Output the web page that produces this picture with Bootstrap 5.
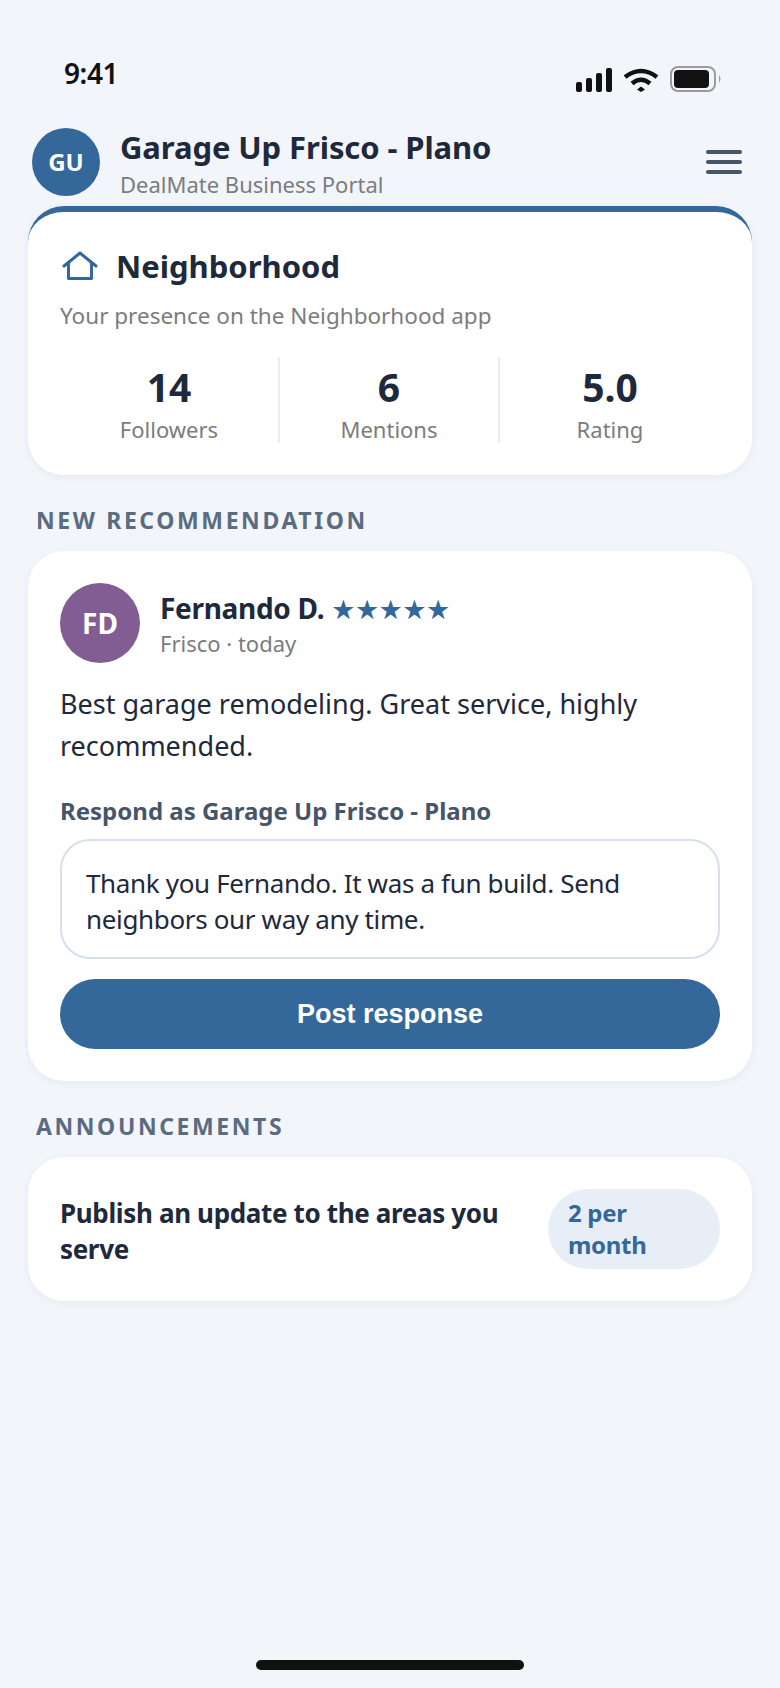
<!DOCTYPE html>
<html lang="en">
<head>
  <meta charset="UTF-8">
  <title>Neighborhood</title>
  <link href="https://cdn.jsdelivr.net/npm/bootstrap@5.3.0/dist/css/bootstrap.min.css" rel="stylesheet">
  <style>
    body { background: #f2f5fa; font-family: "Noto Sans", "Open Sans", sans-serif; color: #1e293b; }
    .phone { width: 780px; height: 1688px; padding: 0 28px; position: relative; overflow: hidden; }
    .status-row { height: 128px; padding: 53px 30px 0 36px; color: #111; }
    .clock { font-size: 28px; font-weight: 600; line-height: 40px; letter-spacing: -.4px; }
    .status-icons { margin-top: 13px; }
    .head-row { height: 78px; padding: 0 0 0 4px; }
    .name-block { padding-top: 1px; margin-left: 20px; }
    .round-mark { width: 68px; height: 68px; background: #34689a; color: #fff; font-weight: 700; font-size: 24px; flex: none; }
    .biz-name { font-size: 31px; font-weight: 700; line-height: 36px; letter-spacing: -.1px; }
    .biz-sub { font-size: 22px; line-height: 30px; color: #7c7c7c; margin-top: 4px; }
    .menu-lines { width: 36px; margin: 22px 10px 0 0; }
    .menu-lines span { display: block; height: 4px; border-radius: 2px; background: #475569; margin-bottom: 6px; }
    .panel { background: #fff; border-radius: 36px; box-shadow: 0 2px 8px rgba(30, 41, 59, .06); padding: 32px 32px; }
    .panel-top { border-top: 6px solid #34689a; height: 269px; padding-top: 34px; }
    .panel-title { font-size: 31px; font-weight: 700; line-height: 40px; margin-left: 2px; }
    .home-icon { margin-left: 2px; }
    .panel-sub { font-size: 22.5px; line-height: 30px; color: #7c7c7c; margin-top: 15px; }
    .stat-row { margin-top: 26px; }
    .stat-cell { border-right: 2px solid #e8edf3; height: 86px; }
    .stat-cell:last-child { border-right: 0; }
    .stat-num { font-size: 39px; font-weight: 700; line-height: 46px; padding-top: 7px; }
    .stat-label { font-size: 22px; line-height: 30px; color: #7c7c7c; margin-top: 4px; }
    .section-label { font-size: 23px; font-weight: 700; letter-spacing: 2.6px; color: #5b6b80; line-height: 30px; padding-left: 8px; margin: 30px 0 16px; }
    .fd-mark { width: 80px; height: 80px; background: #815d94; color: #fff; font-size: 28px; font-weight: 700; flex: none; }
    .rev-name { font-size: 28px; font-weight: 700; line-height: 36px; letter-spacing: -.3px; margin-top: 1px; }
    .rev-stars { font-size: 27px; color: #34689a; letter-spacing: -.5px; font-family: "DejaVu Sans", sans-serif; }
    .rev-meta { font-size: 22px; line-height: 30px; color: #7c7c7c; }
    .rev-text { font-size: 27px; line-height: 42px; margin: 20px 0 0; }
    .respond-label { font-size: 24px; font-weight: 700; color: #475569; line-height: 32px; margin: 28px 0 12px; }
    .reply-box { border: 2px solid #d5e0ea; border-radius: 30px; padding: 24px; font-size: 26px; line-height: 36px; height: 120px; letter-spacing: -.35px; }
    .post-btn { background: #34689a; border: 0; border-radius: 35px; height: 70px; width: 100%; color: #fff; font-family: "Liberation Sans", sans-serif; font-weight: 700; font-size: 27px; margin-top: 20px; }
    .pub-text { font-size: 26px; font-weight: 700; line-height: 36px; letter-spacing: -.35px; padding-top: 4px; }
    .quota-pill { background: #e8eef7; color: #34689a; font-size: 24px; font-weight: 700; line-height: 32px; border-radius: 40px; padding: 8px 20px; width: 172px; height: 80px; flex: none; letter-spacing: -.3px; }
    .home-bar { position: absolute; left: 256px; top: 1660px; width: 268px; height: 10px; border-radius: 5px; background: #111; }
  </style>
</head>
<body>
  <div class="phone">
    <div class="status-row d-flex justify-content-between align-items-start">
      <div class="clock">9:41</div>
      <svg class="status-icons" width="146" height="28" viewBox="0 0 146 28">
        <rect x="0" y="16" width="6" height="10" rx="2" fill="#111"/>
        <rect x="10" y="12" width="6" height="14" rx="2" fill="#111"/>
        <rect x="20" y="7" width="6" height="19" rx="2" fill="#111"/>
        <rect x="30" y="2" width="6" height="24" rx="2" fill="#111"/>
        <path d="M49 11 Q65 -1 81 11" fill="none" stroke="#111" stroke-width="4.500"/>
        <path d="M56 17.500 Q65 10 74 17.500" fill="none" stroke="#111" stroke-width="4.500"/>
        <path d="M61 23.500 L65 20.500 L69 23.500 L65 26 Z" fill="#111"/>
        <rect x="95" y="1" width="44" height="24" rx="7" fill="none" stroke="#9b9b9b" stroke-width="2"/>
        <rect x="98" y="4" width="35" height="18" rx="4" fill="#111"/>
        <path d="M143 9 Q146 13 143 17 Z" fill="#9b9b9b"/>
      </svg>
    </div>
    <div class="head-row d-flex align-items-start justify-content-between">
      <div class="d-flex align-items-start">
        <div class="round-mark rounded-circle d-flex align-items-center justify-content-center">GU</div>
        <div class="name-block">
          <div class="biz-name">Garage Up Frisco - Plano</div>
          <div class="biz-sub">DealMate Business Portal</div>
        </div>
      </div>
      <div class="menu-lines"><span></span><span></span><span></span></div>
    </div>
    <div class="panel panel-top">
      <div class="d-flex align-items-center gap-3">
        <svg class="home-icon" width="36" height="30" viewBox="0 0 36 30">
          <path d="M2 15 L18 2 L34 15 M6.500 12 V27.500 H29.500 V12" fill="none" stroke="#34689a" stroke-width="3" stroke-linejoin="round" stroke-linecap="round"/>
        </svg>
        <div class="panel-title">Neighborhood</div>
      </div>
      <div class="panel-sub">Your presence on the Neighborhood app</div>
      <div class="row g-0 text-center stat-row">
        <div class="col-4 stat-cell"><div class="stat-num">14</div><div class="stat-label">Followers</div></div>
        <div class="col-4 stat-cell"><div class="stat-num">6</div><div class="stat-label">Mentions</div></div>
        <div class="col-4 stat-cell"><div class="stat-num">5.0</div><div class="stat-label">Rating</div></div>
      </div>
    </div>
    <div class="section-label">NEW RECOMMENDATION</div>
    <div class="panel">
      <div class="d-flex align-items-center">
        <div class="fd-mark rounded-circle d-flex align-items-center justify-content-center me-3">FD</div>
        <div class="ms-1">
          <div class="rev-name">Fernando D. <span class="rev-stars">★★★★★</span></div>
          <div class="rev-meta">Frisco · today</div>
        </div>
      </div>
      <p class="rev-text">Best garage remodeling. Great service, highly recommended.</p>
      <div class="respond-label">Respond as Garage Up Frisco - Plano</div>
      <div class="reply-box">Thank you Fernando. It was a fun build. Send neighbors our way any time.</div>
      <button class="btn post-btn" type="button">Post response</button>
    </div>
    <div class="section-label">ANNOUNCEMENTS</div>
    <div class="panel d-flex align-items-center justify-content-between gap-4">
      <div class="pub-text">Publish an update to the areas you serve</div>
      <div class="quota-pill">2 per month</div>
    </div>
    <div class="home-bar"></div>
  </div>
  <script src="https://cdn.jsdelivr.net/npm/bootstrap@5.3.0/dist/js/bootstrap.bundle.min.js"></script>
</body>
</html>
